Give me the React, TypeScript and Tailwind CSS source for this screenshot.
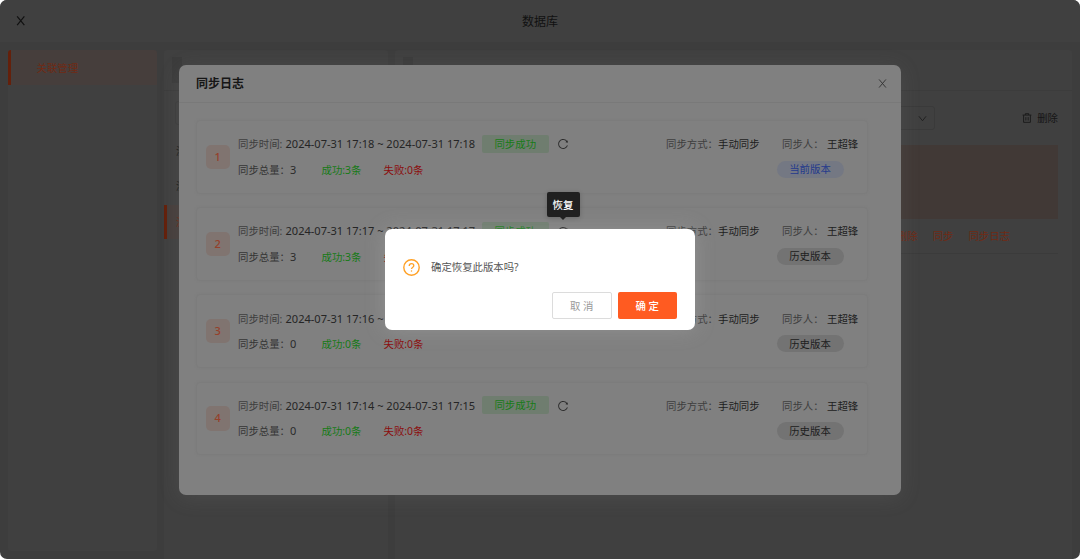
import React from "react";

type Log = {
  id: number;
  from: string;
  to: string;
  total: number;
  current?: boolean;
};

const logs: Log[] = [
  { id: 1, from: "2024-07-31 17:18", to: "2024-07-31 17:18", total: 3, current: true },
  { id: 2, from: "2024-07-31 17:17", to: "2024-07-31 17:17", total: 3 },
  { id: 3, from: "2024-07-31 17:16", to: "2024-07-31 17:16", total: 0 },
  { id: 4, from: "2024-07-31 17:14", to: "2024-07-31 17:15", total: 0 },
];

function CloseIcon({ className }: { className: string }) {
  return (
    <svg viewBox="0 0 10 10" className={className} fill="none" stroke="currentColor">
      <path d="M1.200 0.500 8.800 9.500M8.800 0.500 1.200 9.500" />
    </svg>
  );
}

function ReloadIcon() {
  return (
    <svg viewBox="0 0 1024 1024" className="size-[12px] text-[#2b2b2b]" fill="currentColor">
      <path d="M909.1 209.3l-56.4 44.1C775.8 155.1 656.2 92 521.9 92 290 92 102.3 279.5 102 511.5 101.7 743.7 289.8 932 521.9 932c181.3 0 335.8-115 394.6-276.1 1.5-4.2-.7-8.9-4.9-10.3l-56.7-19.5a8 8 0 0 0-10.1 4.8c-1.8 5-3.8 10-5.9 14.9-17.3 41-42.1 77.8-73.7 109.4A344.77 344.77 0 0 1 655.9 829c-42.3 17.9-87.4 27-133.8 27-46.5 0-91.5-9.1-133.8-27A341.5 341.5 0 0 1 279 755.200a342.160 342.160 0 0 1-73.700-109.400c-17.900-42.400-27-87.400-27-133.900s9.100-91.500 27-133.900c17.300-41 42.100-77.800 73.700-109.400 31.600-31.600 68.400-56.400 109.300-73.800 42.300-17.900 87.400-27 133.800-27 46.500 0 91.500 9.100 133.800 27a341.500 341.500 0 0 1 109.300 73.800c9.900 9.900 19.200 20.400 27.800 31.400l-60.200 47a8 8 0 0 0 3 14.100l175.600 43c5 1.200 9.900-2.600 9.900-7.700l.8-180.900c-.1-6.600-7.800-10.300-13-6.200z" />
    </svg>
  );
}

function TrashIcon() {
  return (
    <svg viewBox="0 0 12 12" className="mr-[5px] size-[10px]" fill="none" stroke="currentColor">
      <path d="M0.700 2.500H11.300M4 2.300V0.800H8V2.300M1.900 2.700V11.200H10.100V2.700M4.600 5V9M7.400 5V9" />
    </svg>
  );
}

function LogCard({ log }: { log: Log }) {
  return (
    <div className="flex h-[73.700px] w-[672.500px] shrink-0 items-center rounded-[4px] border border-[#7c7c7c] pl-[9px] pr-[8px] shadow-[0_0_2px_#7b7b7b]">
      <div className="flex size-[24.500px] shrink-0 items-center justify-center rounded-[5px] bg-[#807470] pb-px text-[11px] font-medium text-[#96402a]">
        {log.id}
      </div>
      <div className="ml-[8px] flex min-w-0 flex-1 flex-col pt-px">
        <div className="flex h-[25px] items-center">
          <span className="w-[47.500px] text-[#3e3e3e]">同步时间:</span>
          <span className="w-[196px] pb-px text-[11.050px] text-[#252525]">
            {log.from} ~ {log.to}
          </span>
          <span className="mr-[8px] mb-px flex h-[18px] w-[67.500px] items-center justify-center rounded-[2px] bg-[#6f7d6f] text-[#177b17]">
            同步成功
          </span>
          <ReloadIcon />
          <span className="ml-auto w-[52px] text-[#3e3e3e]">同步方式：</span>
          <span className="w-[64px] text-[#202020]">手动同步</span>
          <span className="w-[45px] text-[#3e3e3e]">同步人：</span>
          <span className="w-[32px] text-[#202020]">王超锋</span>
        </div>
        <div className="flex h-[26px] items-center">
          <span className="w-[52px] text-[#353535]">同步总量：</span>
          <span className="w-[31.500px] pb-px text-[11px] text-[#2b2b2b]">{log.total}</span>
          <span className="w-[62px] text-[#167a16]">成功:{log.total}条</span>
          <span className="text-[#8b0d0d]">失败:0条</span>
          {log.current ? (
            <span className="mr-[15.500px] mb-px ml-auto flex h-[17.500px] w-[67px] items-center justify-center rounded-full bg-[#747883] text-[#243a8c]">
              当前版本
            </span>
          ) : (
            <span className="mr-[15.500px] mb-px ml-auto flex h-[17.500px] w-[67px] items-center justify-center rounded-full bg-[#737373] text-[#202020]">
              历史版本
            </span>
          )}
        </div>
      </div>
    </div>
  );
}

function Page() {
  return (
    <div className="flex h-full w-full flex-col overflow-hidden rounded-[7px] bg-[#3d3d3d]">
      <header className="grid h-[42px] shrink-0 grid-cols-3 items-center bg-[#404040] px-[16px] text-[#111111]">
        <CloseIcon className="size-[9.500px] stroke-[1.3]" />
        <span className="pt-[2px] text-center text-[12px]">数据库</span>
      </header>
      <div className="flex min-h-0 flex-1 gap-[7.500px] pt-[8px] pl-[7.500px]">
        <nav className="h-[501px] w-[149px] shrink-0 overflow-hidden rounded-[3px] bg-[#404040]">
          <div className="flex h-[35px] items-center border-l-[3px] border-[#64200b] bg-[#463e3c] pt-px pl-[26px] text-[#702a14]">
            关联管理
          </div>
        </nav>
        <section className="flex w-[223.500px] shrink-0 flex-col rounded-t-[3px] bg-[#404040]">
          <div className="h-[40.500px] shrink-0 border-b border-[#3c3c3c] pt-[7px] pl-[7.500px]">
            <div className="h-[26px] w-[10px] bg-[#3b3b3b]" />
          </div>
          <div className="mx-[11px] mt-[10px] h-[24px] shrink-0 rounded-[3px] border border-[#3c3c3c]" />
          <div className="mt-[9px] flex h-[35px] items-center pl-[12px] text-[#181818]">测试一</div>
          <div className="flex h-[36px] items-center pl-[12px] text-[#181818]">测试二</div>
          <div className="flex h-[34.500px] items-center border-l-[3px] border-[#64200b] bg-[#463e3c] pl-[9px] text-[#702a14]">
            测试三
          </div>
        </section>
        <section className="flex w-[677px] shrink-0 flex-col rounded-t-[3px] bg-[#404040]">
          <div className="h-[41px] shrink-0 border-b border-[#3c3c3c] pt-[7px] pl-[7.500px]">
            <div className="h-[26px] w-[10px] bg-[#3b3b3b]" />
          </div>
          <div className="mt-[15px] flex h-[24px] shrink-0 items-center justify-between pr-[14px] pl-[400px]">
            <div className="flex h-full w-[140px] items-center justify-end rounded-[3px] border border-[#3a3a3a] pr-[7px] text-[#1e1e1e]">
              <svg viewBox="0 0 10 10" className="size-[9px]" fill="none" stroke="currentColor">
                <path d="M1 2.500 5 7.500 9 2.500" />
              </svg>
            </div>
            <div className="flex items-center text-[#161616]">
              <TrashIcon />
              <span className="pt-px">删除</span>
            </div>
          </div>
          <div className="mx-[14.500px] mt-[15px] h-[74px] shrink-0 bg-[#413936]" />
          <div className="mx-[14.500px] flex h-[34.500px] shrink-0 items-center justify-end gap-[15px] border-b border-[#3b3b3b] pt-px pr-[47.500px] text-[#702a14]">
            <span>删除</span>
            <span>同步</span>
            <span>同步日志</span>
          </div>
        </section>
      </div>
    </div>
  );
}

function SyncLogDialog() {
  return (
    <div className="absolute top-[65px] left-[179px] flex h-[429.700px] w-[722px] flex-col rounded-[7px] bg-[#808080] shadow-[0_3px_20px_rgba(120,120,120,0.2)]">
      <div className="flex h-[37.700px] shrink-0 items-center justify-between border-b border-[#797979] pr-[14px] pl-[17px]">
        <h2 className="pt-[2px] text-[12px] font-semibold text-[#161616]">同步日志</h2>
        <CloseIcon className="size-[9px] text-[#303030]" />
      </div>
      <div className="flex flex-col gap-[13.500px] pt-[17.300px] pl-[16.500px]">
        {logs.map((log) => (
          <LogCard key={log.id} log={log} />
        ))}
      </div>
    </div>
  );
}

function RestoreConfirm() {
  return (
    <div className="absolute top-[229px] left-[385px] flex h-[101px] w-[310px] flex-col rounded-[7px] bg-white shadow-[0_0_20px_rgba(190,190,190,0.25)]">
      <div className="mt-[29.500px] flex h-[17px] items-center pl-[17.500px]">
        <svg viewBox="0 0 17 17" className="size-[17px] text-[#ffa126]" fill="none" stroke="currentColor">
          <circle cx="8.500" cy="8.500" r="7.700" strokeWidth="1.400" />
          <path d="M6.200 6.900C6.200 5.500 7.200 4.600 8.500 4.600S10.800 5.500 10.800 6.700C10.800 8.200 8.500 8.300 8.500 10.100" strokeWidth="1.300" />
          <circle cx="8.500" cy="12" r="0.750" fill="currentColor" stroke="none" />
        </svg>
        <span className="ml-[11.500px] text-[#555555]">确定恢复此版本吗?</span>
      </div>
      <div className="mt-[16.500px] flex h-[27px] justify-end gap-[6px] pr-[18px]">
        <button className="w-[59.500px] rounded-[2px] border border-[#dcdcdc] pt-px text-[#999999]">取 消</button>
        <button className="w-[59.500px] rounded-[2px] bg-[#ff5b21] pt-px font-medium text-white">确 定</button>
      </div>
    </div>
  );
}

function RestoreTooltip() {
  return (
    <div className="absolute top-[192px] left-[546.500px] flex w-[33px] flex-col items-center">
      <div className="flex h-[25px] w-full items-center justify-center rounded-[2px] bg-[#202020] pt-px font-medium text-white shadow-[0_1px_5px_rgba(0,0,0,0.2)]">
        恢复
      </div>
      <svg viewBox="0 0 6 3" className="h-[3px] w-[6px]" fill="#202020">
        <path d="M0 0H6L3 3Z" />
      </svg>
    </div>
  );
}

export default function App() {
  return (
    <div className="relative h-[559px] w-[1080px] overflow-hidden bg-white font-['Noto_Sans','Noto_Sans_CJK_SC',sans-serif] text-[10.400px] leading-none whitespace-nowrap">
      <Page />
      <SyncLogDialog />
      <RestoreConfirm />
      <RestoreTooltip />
    </div>
  );
}
